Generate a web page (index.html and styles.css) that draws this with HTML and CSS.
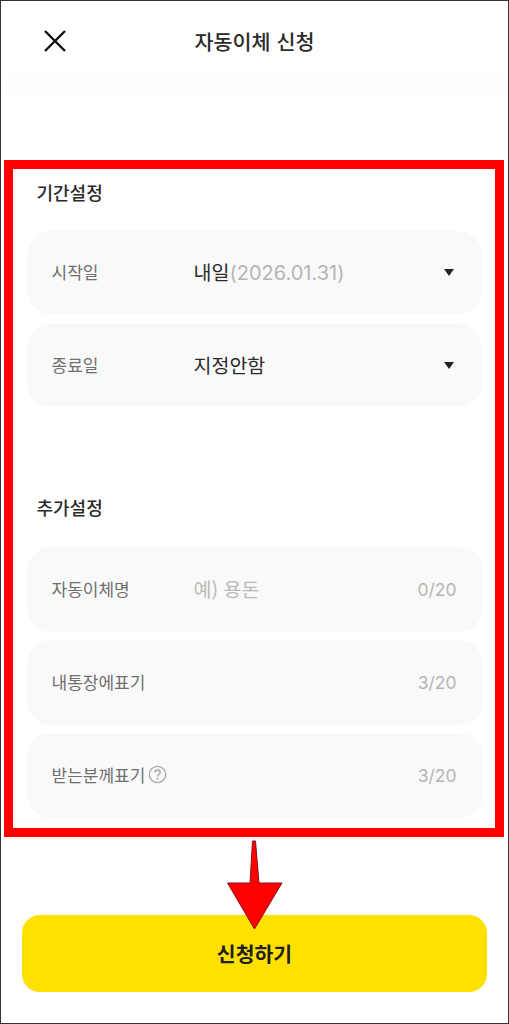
FILE: index.html
```html
<!doctype html>
<html lang="ko">
<head>
    <meta charset="UTF-8">
    <title>자동이체 신청</title>
    <link rel="stylesheet" href="styles.css">
</head>
<body>
    <div class="page">
        <div class="header">
            <svg class="close" width="24" height="24" viewBox="0 0 24 24"><path d="M2 2L22 22M22 2L2 22" stroke="#111" stroke-width="2.4" fill="none"/></svg>
            <h1>자동이체 신청</h1>
        </div>

        <div class="box">
            <h2>기간설정</h2>
            <div class="row">
                <span class="label">시작일</span>
                <span class="value">내일<em>(2026.01.31)</em></span>
                <i class="caret"></i>
            </div>
            <div class="row">
                <span class="label">종료일</span>
                <span class="value">지정안함</span>
                <i class="caret"></i>
            </div>

            <h2 class="second">추가설정</h2>
            <div class="row tall">
                <span class="label">자동이체명</span>
                <span class="value hint">예) 용돈</span>
                <span class="count">0/20</span>
            </div>
            <div class="row tall">
                <span class="label">내통장에표기</span>
                <span class="count">3/20</span>
            </div>
            <div class="row tall">
                <span class="label">받는분께표기<svg class="help" width="19" height="19" viewBox="0 0 19 19"><circle cx="9.5" cy="9.5" r="8.2" stroke="#a8a8a8" stroke-width="1.3" fill="none"/><path d="M6.8 7.6C6.800 6 8.100 5 9.500 5C11 5 12.200 6 12.200 7.400C12.200 9.200 9.600 9.300 9.600 11.400" stroke="#a8a8a8" stroke-width="1.5" fill="none"/><circle cx="9.6" cy="13.8" r="1" fill="#a8a8a8"/></svg></span>
                <span class="count">3/20</span>
            </div>
        </div>

        <button class="submit">신청하기</button>

        <!-- 빨간 화살표 -->
        <svg class="arrow" width="56" height="90" viewBox="0 0 56 90"><path d="M25.500 1H28.500L32 43H55L27.500 89L0.500 43H23Z" fill="#f00" stroke="#8a1020" stroke-width="1"/></svg>
    </div>
</body>
</html>
```

FILE: styles.css
```css
*{
    padding: 0;
    margin: 0;
    box-sizing: border-box;
}
body{
    font-family: "Noto Sans CJK KR", "Liberation Sans", sans-serif;
    background-color: #fff;
}
.page{
    position: relative;
    width: 509px;
    height: 1024px;
    border: 1px solid #333;
    background-color: #fff;
}
.header{
    display: flex;
    align-items: center;
    justify-content: center;
    position: relative;
    height: 94px;
    padding-bottom: 14px;
    background: linear-gradient(#fff 70%, #fdfdfd);
}
.header h1{
    font-size: 20.700px;
    font-weight: 500;
    color: #2b2b2b;
}
.close{
    position: absolute;
    left: 42px;
    top: 28px;
}
.box{
    margin: 65px 4px 0 3px;
    height: 677px;
    padding: 0 13.500px;
    border: 9.500px solid #f00;
    background-color: #fff;
}
.box h2{
    height: 61.500px;
    padding: 5.500px 0 0 10px;
    font-size: 18px;
    line-height: 34px;
    font-weight: 500;
    color: #2b2b2b;
}
.box h2.second{
    margin-top: 81px;
    height: 59px;
    padding-top: 2px;
}
.row{
    display: flex;
    align-items: center;
    height: 83px;
    margin-bottom: 10px;
    padding: 0 28px 2px 25px;
    border-radius: 24px;
    background-color: #f9f9f9;
}
.row.tall{
    height: 85px;
    margin-bottom: 8px;
    margin-right: -1px;
    padding-right: 26px;
}
.label{
    display: flex;
    align-items: center;
    gap: 3px;
    width: 142px;
    flex-shrink: 0;
    font-size: 17px;
    color: #6f6f6f;
}
.value{
    flex: 1;
    font-size: 19.500px;
    color: #2b2b2b;
}
.value em{
    font-style: normal;
    font-family: "Inter", "Liberation Sans", sans-serif;
    font-size: 20px;
    color: #b5b5b5;
}
.value.hint{
    color: #b8b8b8;
}
.caret{
    width: 0;
    height: 0;
    margin-top: 2px;
    border-left: 5px solid transparent;
    border-right: 5px solid transparent;
    border-top: 7px solid #222;
}
.row.tall .count{
    margin-left: auto;
}
.count{
    margin-top: 2px;
    font-family: "Inter", "Liberation Sans", sans-serif;
    font-size: 17.500px;
    color: #b5b5b5;
}
.submit{
    display: block;
    width: 465px;
    height: 77px;
    margin: 78px 0 0 21px;
    padding-bottom: 2px;
    border: 0;
    border-radius: 18px;
    background-color: #ffe100;
    font-family: inherit;
    font-size: 20.500px;
    font-weight: 700;
    color: #1f1f1f;
}
.arrow{
    position: absolute;
    left: 226px;
    top: 839px;
}
```
